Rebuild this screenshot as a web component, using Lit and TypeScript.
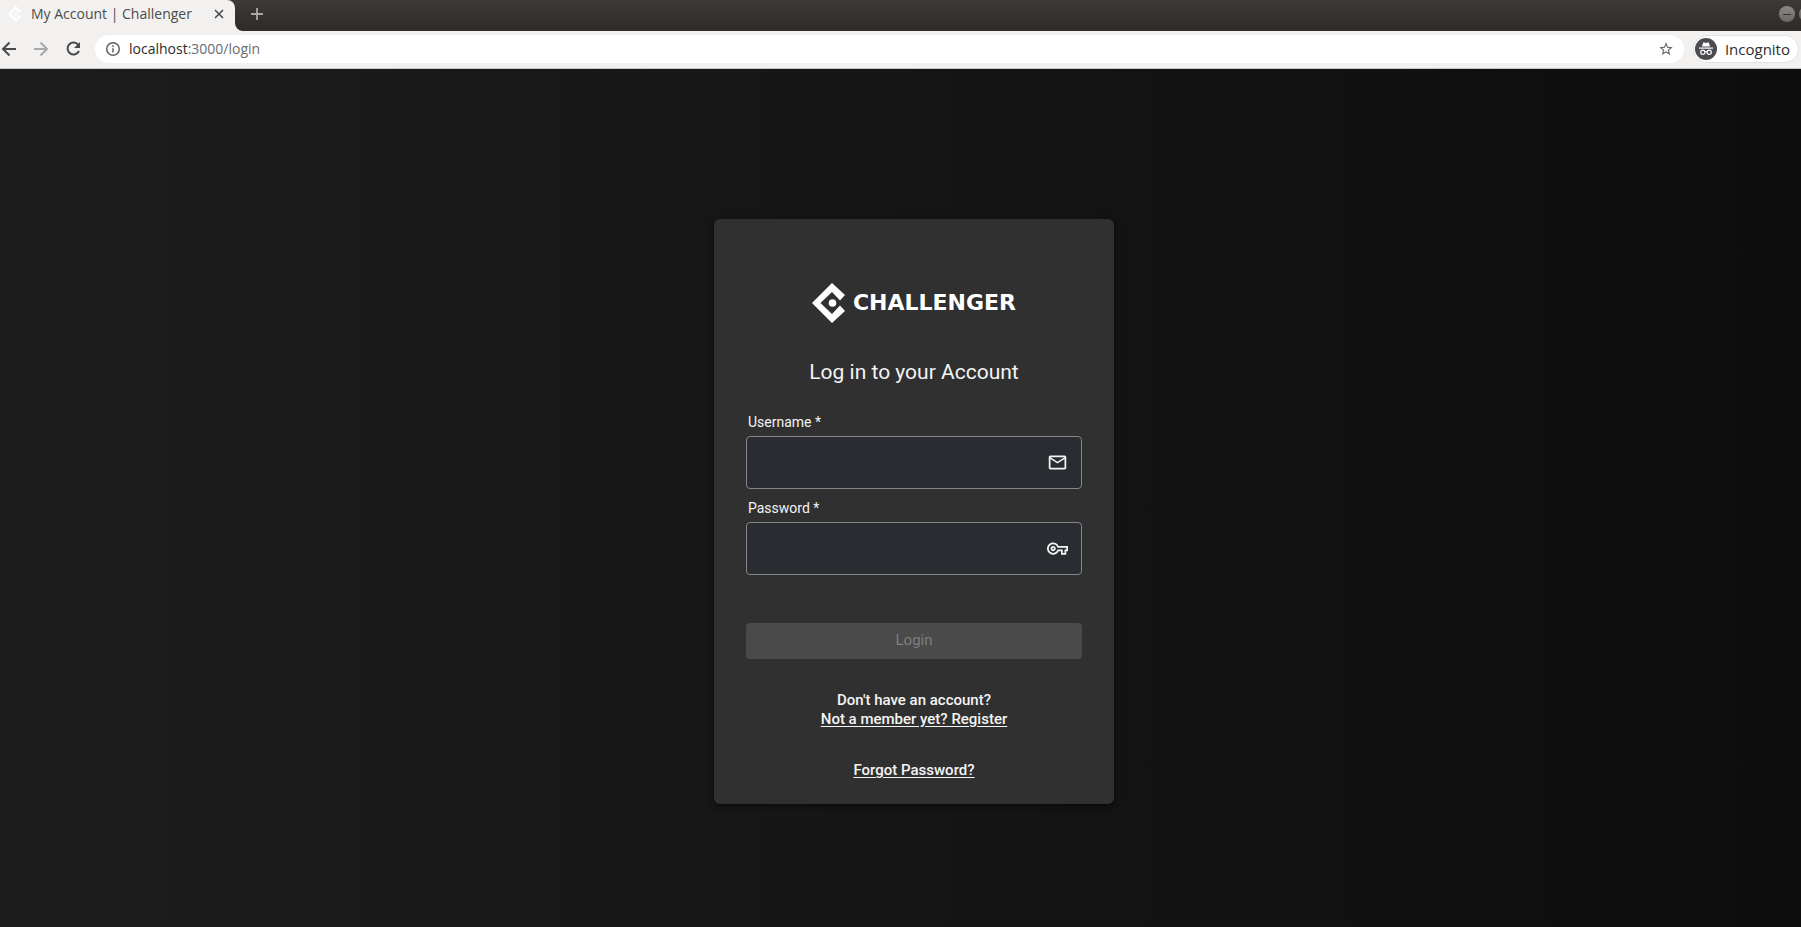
import { LitElement, html, css, svg } from "lit";
import { customElement, state } from "lit/decorators.js";

const markPath = svg`<path d="M20 0 L33 12 L28 17.500 L20 9 L8.500 20 L20 31 L28 22.500 L33 28 L20 40 L0 20 Z"/><circle cx="20.500" cy="20" r="3.800"/>`;

@customElement("browser-bar")
class BrowserBar extends LitElement {
  static styles = css`
    :host { display: block; font-family: "Open Sans", "Noto Sans", sans-serif; }
    svg { display: block; flex: none; }
    button { border: 0; padding: 0; background: none; color: inherit; font: inherit; display: flex; align-items: center; justify-content: center; flex: none; }
    .strip { display: flex; height: 31px; background: linear-gradient(#3c3b37, #2c2b28); overflow: hidden; }
    .tab { display: flex; align-items: center; width: 235px; box-sizing: border-box; padding: 0 8px 3px 7px; background: #f2f1f0; color: #4c4c4c; border-radius: 0 8px 0 0; }
    .tab-title { font-size: 14px; line-height: 20px; margin-left: 8px; flex: 1; white-space: nowrap; }
    .corner { align-self: flex-end; }
    .new { width: 24px; height: 28px; color: #a9a8a5; margin-left: 2px; }
    .space { flex: 1; }
    .controls { display: flex; gap: 4px; align-items: center; height: 28px; width: 22px; overflow: hidden; }
    .control { width: 16px; height: 16px; border-radius: 50%; background: linear-gradient(#8b8983, #6a6863); color: #35342f; }
    .tools { display: flex; align-items: center; height: 38px; box-sizing: border-box; padding: 4px 2px 5px 0; background: #f2f1f0; border-bottom: 1px solid #c9c8c6; color: #4a4a4a; }
    .nav { display: flex; gap: 12px; padding-right: 11px; }
    .nav button { width: 20px; height: 28px; }
    .nav .off { color: #a9a9a9; }
    .box { flex: 1; display: flex; align-items: center; height: 28px; border-radius: 14px; background: #fff; padding: 0 10px; gap: 8px; color: #5f6063; }
    .url { flex: 1; font-size: 14px; line-height: 20px; color: #6c6c6c; }
    .host { color: #2b2b2b; }
    .pill { display: flex; align-items: center; gap: 8px; height: 28px; box-sizing: border-box; border: 1px solid #e2e2e2; border-radius: 14px; background: #fff; margin-left: 9px; padding: 0 8px 0 1px; font-size: 15px; line-height: 20px; color: #2d2d2d; white-space: nowrap; }
  `;
  render() {
    return html`
      <div class="strip">
        <div class="tab">
          <svg width="16" height="16" viewBox="-2 0 40 40" fill="#fff">${markPath}</svg>
          <span class="tab-title">My Account | Challenger</span>
          <button aria-label="Close tab"><svg width="16" height="16" viewBox="0 0 16 16" fill="none" stroke="currentColor" stroke-width="1.600"><path d="M4 4l8 8M12 4l-8 8"/></svg></button>
        </div>
        <svg class="corner" width="8" height="8" viewBox="0 0 8 8" fill="#f2f1f0"><path d="M0 0v8h8A8 8 0 0 1 0 0z"/></svg>
        <button class="new" aria-label="New tab"><svg width="14" height="14" viewBox="0 0 14 14" stroke="currentColor" stroke-width="1.800"><path d="M7 1v12M1 7h12"/></svg></button>
        <span class="space"></span>
        <div class="controls">
          <button class="control" aria-label="Minimize"><svg width="10" height="10" viewBox="0 0 10 10" stroke="currentColor"><path d="M1 5.500h8"/></svg></button>
          <button class="control" aria-label="Maximize"></button>
        </div>
      </div>
      <div class="tools">
        <div class="nav">
          <button aria-label="Back"><svg width="20" height="20" viewBox="0 0 20 20" fill="none" stroke="currentColor" stroke-width="2"><path d="M16 10H3M9.500 3.500L3 10l6.500 6.500"/></svg></button>
          <button class="off" aria-label="Forward" disabled><svg width="20" height="20" viewBox="0 0 20 20" fill="none" stroke="currentColor" stroke-width="2"><path d="M2 10h13M8.500 3.500L15 10l-6.500 6.500"/></svg></button>
          <button aria-label="Reload"><svg width="20" height="20" viewBox="0 0 20 20" fill="none" stroke="currentColor" stroke-width="2"><path d="M14.500 6A6 6 0 1 0 15 12"/><path d="M16 3v6h-6z" fill="currentColor" stroke="none"/></svg></button>
        </div>
        <div class="box">
          <svg width="16" height="16" viewBox="0 0 16 16" fill="none" stroke="currentColor" stroke-width="1.500"><circle cx="8" cy="8" r="6.300"/><path d="M8 7.200v4.300M8 4.300v1.600"/></svg>
          <span class="url"><span class="host">localhost</span>:3000/login</span>
          <button aria-label="Bookmark"><svg width="16" height="16" viewBox="0 0 24 24" fill="currentColor"><path d="M22 9.240l-7.190-.62L12 2 9.190 8.630 2 9.240l5.460 4.730L5.820 21 12 17.270 18.180 21l-1.630-7.030L22 9.240zM12 15.400l-3.760 2.270 1-4.280-3.320-2.880 4.380-.38L12 6.100l1.710 4.040 4.380.38-3.320 2.880 1 4.280L12 15.400z"/></svg></button>
        </div>
        <div class="pill">
          <svg width="22" height="22" viewBox="0 0 22 22"><circle cx="11" cy="11" r="11" fill="#4b4c4f"/><g fill="#fff"><path d="M7 8.500L8.200 4.500h1.300l1.500.5 1.500-.5h1.300L15 8.500z"/><rect x="4" y="9.500" width="14" height="1.200"/></g><g fill="none" stroke="#fff" stroke-width="1.200"><circle cx="7.800" cy="14.300" r="2.100"/><circle cx="14.200" cy="14.300" r="2.100"/><path d="M9.900 14q1.100-.8 2.200 0"/></g></svg>
          <span>Incognito</span>
        </div>
      </div>`;
  }
}

@customElement("login-card")
class LoginCard extends LitElement {
  @state() private user = "";
  @state() private pass = "";

  static styles = css`
    :host { display: block; width: 100%; max-width: 400px; font-family: Roboto, sans-serif; color: #f4f4f4; }
    svg { display: block; flex: none; }
    .card { background: #303030; border-radius: 6px; padding: 64px 32px 24px; box-shadow: 0 2px 4px rgba(0, 0, 0, .4), 0 1px 8px rgba(0, 0, 0, .15); }
    .logo { display: flex; align-items: center; justify-content: center; gap: 8px; height: 40px; color: #fff; }
    .word { font: bold 22px/40px "DejaVu Sans", sans-serif; }
    h1 { margin: 33px 0 24px; font-size: 21px; line-height: 32px; font-weight: 400; text-align: center; }
    form { display: flex; flex-direction: column; }
    label { font-size: 14px; line-height: 20px; padding: 0 2px; }
    .field { display: flex; align-items: center; height: 53px; box-sizing: border-box; border: 1px solid #85868a; border-radius: 4px; background: #292c31; margin: 4px 0 9px; padding: 0 13px 0 12px; }
    input { flex: 1; min-width: 0; border: 0; outline: 0; background: none; color: inherit; font: inherit; }
    .login { height: 36px; border: 0; border-radius: 4px; margin-top: 39px; padding: 0 0 2px; font: 400 15px/20px Roboto, sans-serif; background: #1976d2; color: #fff; }
    .login:disabled { background: #4a4a4a; color: #7e7e7e; }
    .links { display: flex; flex-direction: column; align-items: center; margin-top: 32px; font-size: 15px; line-height: 19px; font-weight: 500; }
    a { color: inherit; text-underline-offset: 2px; }
    .forgot { margin-top: 32px; }
  `;

  render() {
    return html`
      <main class="card">
        <div class="logo">
          <svg width="33" height="40" viewBox="0 0 33 40" fill="currentColor">${markPath}</svg>
          <span class="word">CHALLENGER</span>
        </div>
        <h1>Log in to your Account</h1>
        <form @submit=${(e: Event) => e.preventDefault()}>
          <label for="user">Username *</label>
          <div class="field">
            <input id="user" type="text" required .value=${this.user} @input=${(e: any) => (this.user = e.target.value)} />
            <svg width="21" height="21" viewBox="0 0 24 24" fill="currentColor"><path d="M22 6c0-1.100-.9-2-2-2H4c-1.100 0-2 .9-2 2v12c0 1.100.9 2 2 2h16c1.100 0 2-.9 2-2V6zm-2 0l-8 5-8-5h16zm0 12H4V8l8 5 8-5v10z"/></svg>
          </div>
          <label for="pass">Password *</label>
          <div class="field">
            <input id="pass" type="password" required .value=${this.pass} @input=${(e: any) => (this.pass = e.target.value)} />
            <svg width="21" height="21" viewBox="0 0 24 24" fill="currentColor"><path d="M22 19h-6v-4h-2.680c-1.140 2.420-3.600 4-6.320 4-3.860 0-7-3.140-7-7s3.140-7 7-7c2.720 0 5.170 1.580 6.320 4H24v6h-2v4zm-4-2h2v-4h2v-2H11.940l-.23-.67C11.010 8.340 9.110 7 7 7c-2.760 0-5 2.240-5 5s2.240 5 5 5c2.110 0 4.010-1.340 4.710-3.330l.23-.67H18v4zM7 15c-1.650 0-3-1.350-3-3s1.350-3 3-3 3 1.350 3 3-1.350 3-3 3zm0-4c-.55 0-1 .45-1 1s.45 1 1 1 1-.45 1-1-.45-1-1-1z"/></svg>
          </div>
          <button class="login" ?disabled=${!this.user || !this.pass}>Login</button>
        </form>
        <div class="links">
          <span>Don't have an account?</span>
          <a href="#register">Not a member yet? Register</a>
          <a class="forgot" href="#forgot">Forgot Password?</a>
        </div>
      </main>`;
  }
}

@customElement("app-root")
class AppRoot extends LitElement {
  static styles = css`
    :host { display: flex; flex-direction: column; min-height: 100vh; }
    .page { flex: 1; display: flex; justify-content: center; align-items: flex-start; box-sizing: border-box; padding: 150px 0 48px 27px; background: linear-gradient(to right, #1d1d1d, #0d0d0d); }
  `;
  render() {
    return html`<browser-bar></browser-bar><div class="page"><login-card></login-card></div>`;
  }
}
